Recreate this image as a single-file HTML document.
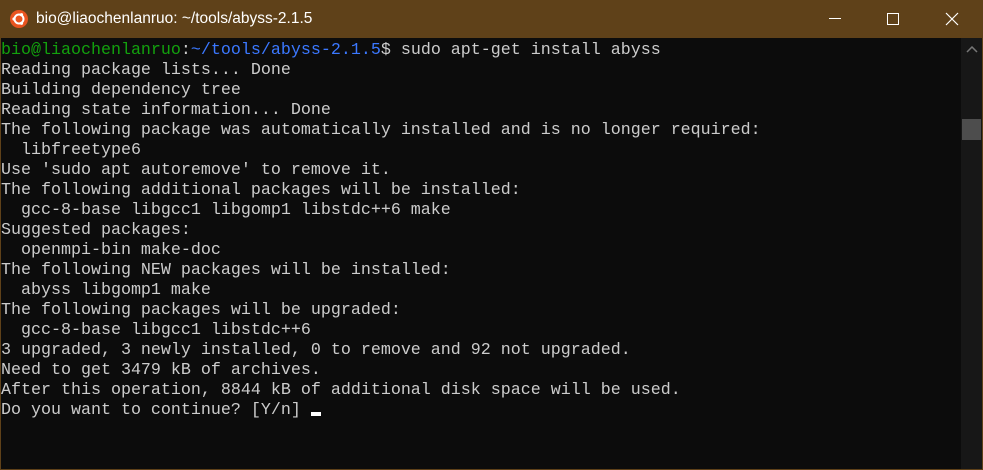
<!DOCTYPE html>
<html><head><meta charset="utf-8"><style>
html,body{margin:0;padding:0;}
body{width:983px;height:470px;overflow:hidden;background:#5f4119;position:relative;font-family:"Liberation Sans",sans-serif;}
.title{position:absolute;left:0;top:0;width:983px;height:38px;background:#5f4119;}
.title .t{position:absolute;left:36px;top:10px;color:#fff;font-size:15.5px;font-family:"Liberation Sans","Noto Sans CJK SC",sans-serif;}
.term{position:absolute;left:1px;top:38px;width:960px;height:431px;background:#0c0c0c;}
.sb{position:absolute;left:961px;top:38px;width:21px;height:431px;background:#171717;}
.thumb{position:absolute;left:1px;top:81px;width:19px;height:21px;background:#4d4d4d;}
pre{margin:0;position:absolute;left:0;top:3px;font-family:"Liberation Mono",monospace;font-size:16.67px;line-height:20px;color:#cccccc;}
.g{color:#13a10e}.b{color:#3b78ff}
.cur{display:inline-block;width:10px;height:4px;background:#fff;vertical-align:-2px}
</style></head><body>
<div class="title">
<svg style="position:absolute;left:10px;top:10px" width="18" height="18" viewBox="0 0 18 18"><circle cx="9" cy="9" r="9" fill="#e95420"/><circle cx="9" cy="9" r="4.5" fill="none" stroke="#fff" stroke-width="2"/><circle cx="4" cy="9" r="1.6" fill="#fff"/><circle cx="11.5" cy="4.7" r="1.6" fill="#fff"/><circle cx="11.5" cy="13.3" r="1.6" fill="#fff"/></svg>
<div class="t">bio@liaochenlanruo: ~/tools/abyss-2.1.5</div>
<div style="position:absolute;left:829px;top:18px;width:12px;height:1px;background:#fff"></div>
<div style="position:absolute;left:887px;top:13px;width:10px;height:10px;border:1px solid #fff"></div>
<svg style="position:absolute;left:945px;top:12px" width="14" height="14"><path d="M1 1L13 13M13 1L1 13" stroke="#fff" stroke-width="1.2"/></svg>
</div>
<div class="term"><pre><span class="g">bio@liaochenlanruo</span>:<span class="b">~/tools/abyss-2.1.5</span>$ sudo apt-get install abyss
Reading package lists... Done
Building dependency tree
Reading state information... Done
The following package was automatically installed and is no longer required:
  libfreetype6
Use 'sudo apt autoremove' to remove it.
The following additional packages will be installed:
  gcc-8-base libgcc1 libgomp1 libstdc++6 make
Suggested packages:
  openmpi-bin make-doc
The following NEW packages will be installed:
  abyss libgomp1 make
The following packages will be upgraded:
  gcc-8-base libgcc1 libstdc++6
3 upgraded, 3 newly installed, 0 to remove and 92 not upgraded.
Need to get 3479 kB of archives.
After this operation, 8844 kB of additional disk space will be used.
Do you want to continue? [Y/n] <span class="cur"></span></pre></div>
<div class="sb"><svg style="position:absolute;left:5px;top:8px" width="12" height="8"><path d="M1 6L6 1L11 6" stroke="#777" stroke-width="1.5" fill="none"/></svg><div class="thumb"></div></div>
</body></html>
